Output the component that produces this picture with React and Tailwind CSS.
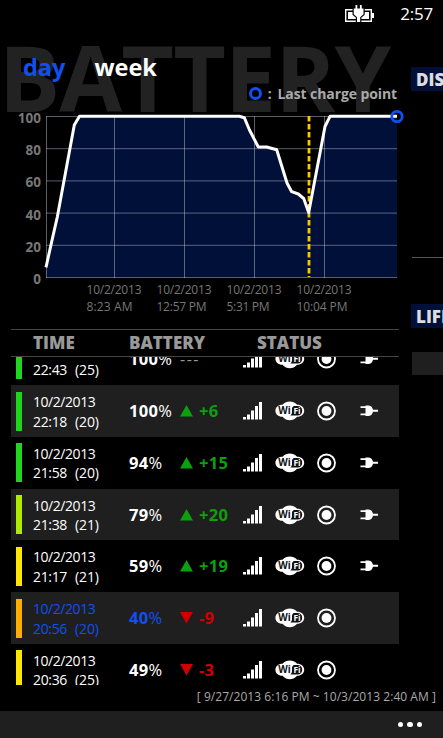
const LEVELS = [100, 80, 60, 40, 20, 0];

const TICKS = [
    { x: 114.5, date: "10/2/2013", time: "8:23 AM", width: 46 },
    { x: 184.5, date: "10/2/2013", time: "12:57 PM", width: 50 },
    { x: 254.5, date: "10/2/2013", time: "5:31 PM", width: 43 },
    { x: 324.5, date: "10/2/2013", time: "10:04 PM", width: 51 },
];

const ROWS = [
    { time: "22:43", gap: "(25)", level: 100, diff: null, bar: "bg-[#1fd51f]", plugged: true },
    { time: "22:18", gap: "(20)", level: 100, diff: 6, bar: "bg-[#1fd51f]", plugged: true },
    { time: "21:58", gap: "(20)", level: 94, diff: 15, bar: "bg-[#1fd51f]", plugged: true },
    { time: "21:38", gap: "(21)", level: 79, diff: 20, bar: "bg-[#b0ea00]", plugged: true },
    { time: "21:17", gap: "(21)", level: 59, diff: 19, bar: "bg-[#ffe600]", plugged: true },
    { time: "20:56", gap: "(20)", level: 40, diff: -9, bar: "bg-[#ffae00]", plugged: false, selected: true },
    { time: "20:36", gap: "(25)", level: 49, diff: -3, bar: "bg-[#ffe600]", plugged: false },
];

const LINE = "46,161.3 51.7,135.7 57.3,111 74.3,19 79.5,10.3 239.3,10.3 244.3,11.7 249.5,24 258.3,41 266.7,41 276.7,43.7 287,77 291.7,85.7 298.3,88 303.7,92.5 308.7,106.5 325,20.5 330,10.3 397,10.3";

function BatteryPlug() {
    return (
        <svg width="30" height="18" viewBox="0 0 30 18" fill="#fff">
            <path d="M.7 4.700h25.600v11.600H.7z" fill="none" stroke="#fff" strokeWidth="1.400" />
            <path d="M27 8h2v5h-2zM3 7h21v7H3z" />
            <path d="M10.500 0h1.800v3.500h2.600V0h1.800v3.500h1.800v5.700l-3.300 3V17h-3.200v-4.800l-3.300-3V3.500h1.800z" stroke="#000" strokeWidth="2.400" paintOrder="stroke" />
        </svg>
    );
}

function Signal() {
    return (
        <svg width="20" height="18" viewBox="0 0 20 18" fill="#fff">
            <path d="M0 15h3v2.500H0zM4 12.500h3v5H4zM8 8.500h3v9H8zM12 4h3v13.500h-3zM16 0h3v17.500h-3z" />
        </svg>
    );
}

function Wifi() {
    return (
        <svg width="30" height="20" viewBox="0 0 30 20">
            <path d="M7.500 3.800C9.500 1.300 12.300.4 14.800.4s5.300.9 7.300 3.400c4.300 0 7.100 2.600 7.100 6s-2.800 6-7.100 6c-2 2.500-4.800 3.400-7.300 3.400s-5.300-.9-7.300-3.400C3.200 15.800.4 13.200.4 9.800s2.800-6 7.100-6z" fill="#fff" />
            <path d="M19 5h3.500c2.900 0 4.700 1.900 4.700 4.700s-1.800 4.800-4.700 4.800h-7.200c1.500-1 1.700-2.100 1.700-3.900V8.200c0-1.700.6-2.600 2-3.200z" fill="#111" />
            <text x="3.200" y="13.400" fontSize="10" fontWeight="700" fill="#111" textLength="12.500" lengthAdjust="spacingAndGlyphs">Wi</text>
            <text x="18.500" y="13.300" fontSize="9.500" fontWeight="700" fill="#fff" textLength="7.200" lengthAdjust="spacingAndGlyphs">Fi</text>
        </svg>
    );
}

function Target() {
    return (
        <svg width="20" height="20" viewBox="0 0 20 20">
            <circle cx="10.500" cy="10" r="8.500" fill="none" stroke="#fff" strokeWidth="1.800" />
            <circle cx="10.500" cy="10" r="4.900" fill="#fff" />
        </svg>
    );
}

function Plug() {
    return (
        <svg width="18" height="12" viewBox="0 0 18 12" fill="#fff">
            <path d="M.5 1.300h5V.5h2.700c2.500 0 4.200 1.500 4.800 4.200h5v2h-5c-.6 2.700-2.300 4.300-4.800 4.300H5.500v-.8h-5V8.400h5V3.100h-5z" />
        </svg>
    );
}

function Chart() {
    return (
        <svg width="411" height="214" viewBox="0 0 411 214" className="block shrink-0">
            <polygon points={`${LINE} 397,171.500 46,171.500`} fill="#001038" />
            {LEVELS.map((level, i) => (
                <g key={level}>
                    <line x1="46" x2="397" y1={10.5 + i * 32.2} y2={10.5 + i * 32.2} stroke="#c8ccdc" strokeOpacity=".45" />
                    <text x="41" y={17 + i * 32.2} textAnchor="end" fontSize="13.500" fontWeight="700" fill="#777">{level}</text>
                </g>
            ))}
            <line x1="46.500" x2="46.500" y1="10" y2="172" stroke="#c8ccdc" strokeOpacity=".45" />
            {TICKS.map((tick) => (
                <g key={tick.x} fontSize="12" fill="#777">
                    <line x1={tick.x} x2={tick.x} y1="10" y2="172" stroke="#c8ccdc" strokeOpacity=".45" />
                    <text x={tick.x - 28} y="187.500" textLength="55">{tick.date}</text>
                    <text x={tick.x - 28} y="205" textLength={tick.width}>{tick.time}</text>
                </g>
            ))}
            <line x1="309" x2="309" y1="10" y2="171" stroke="#f5c800" strokeWidth="2.800" strokeDasharray="5.500 2.500" />
            <polyline points={LINE} fill="none" stroke="#fff" strokeWidth="3" strokeLinejoin="round" />
            <circle cx="397" cy="10.500" r="5.200" fill="none" stroke="#1050f0" strokeWidth="2.800" />
        </svg>
    );
}

function Diff({ value }) {
    if (value === null) {
        return <span className="w-[63px] text-base tracking-[1.500px] text-[#999]">---</span>;
    }
    const up = value > 0;
    return (
        <div className={`flex w-[63px] items-center gap-[6px] ${up ? "text-[#0ca00c]" : "text-[#d00000]"}`}>
            <svg width="13" height="12" viewBox="0 0 13 12" fill="currentColor">
                <path d={up ? "M6.500 0L13 11.500H0z" : "M0 0h13L6.500 11.500z"} />
            </svg>
            <span className="pt-px text-[16.5px] font-bold tracking-[0.3px]">{up ? `+${value}` : value}</span>
        </div>
    );
}

function Row({ row, striped }) {
    return (
        <div className={`flex h-[51.75px] shrink-0 items-center pl-[5px] ${striped ? "bg-[#1f1f1f]" : ""} ${row.selected ? "text-[#1050f0]" : "text-white"}`}>
            <div className={`mr-[11px] h-[39px] w-[6px] ${row.bar}`} />
            <div className="w-[96px] pt-px text-[14px] leading-[19.5px] tracking-[-0.45px]">
                <div>10/2/2013</div>
                <div className="flex">
                    <span className="w-[42px] tracking-[-0.35px]">{row.time}</span>
                    <span className="tracking-[-0.1px]">{row.gap}</span>
                </div>
            </div>
            <div className="w-[51px] pt-px text-[16.5px] tracking-[0.3px]"><b>{row.level}</b>%</div>
            <Diff value={row.diff} />
            <div className="flex items-center">
                <Signal />
                <div className="ml-[12px]"><Wifi /></div>
                <div className="ml-[11px]"><Target /></div>
                {row.plugged && <div className="ml-[24px]"><Plug /></div>}
            </div>
        </div>
    );
}

export default function App() {
    return (
        <div className="flex h-[738px] w-[443px] flex-col overflow-hidden bg-black font-['Open_Sans','Noto_Sans',sans-serif] text-white">
            <div className="flex h-[30px] shrink-0 items-start justify-end gap-[25px] pr-[10px] pt-[5px]">
                <BatteryPlug />
                <span className="text-[17px] leading-[18px] tracking-[-0.2px]">2:57</span>
            </div>

            <div className="flex h-[655px] shrink-0">
                <div className="relative flex w-[411px] shrink-0 flex-col">
                    <div className="absolute left-[-1px] top-[-15px] text-[91px] font-bold leading-[124px] tracking-[-0.8px] text-[#222]">BATTERY</div>

                    <div className="relative flex h-[53px] items-center gap-[29px] pl-[23px] pt-[20px] text-[23.5px] font-bold leading-[32px]">
                        <span className="text-[#1050f0]">day</span>
                        <span>week</span>
                    </div>
                    <div className="relative flex h-[23px] items-center justify-end gap-[6px] pb-[2px] pr-[14px] text-[14px] font-bold tracking-[-0.1px] text-[#aaa]">
                        <div className="size-[13px] rounded-full border-[3px] border-[#1050f0]" />
                        <span>:</span>
                        <span>Last charge point</span>
                    </div>

                    <div className="relative"><Chart /></div>

                    <div className="ml-[11px] mt-[9px] flex h-[28px] w-[388px] shrink-0 items-center border-y border-[#444] text-[17px] font-extrabold text-[#999]">
                        <span className="w-[96px] pl-[22px]">TIME</span>
                        <span className="ml-[22px] w-[128px]">BATTERY</span>
                        <span>STATUS</span>
                    </div>

                    <div className="ml-[11px] flex h-[328px] w-[388px] flex-col overflow-hidden">
                        <div className="mt-[-23.6px] flex flex-col">
                            {ROWS.map((row, i) => (
                                <Row key={row.time} row={row} striped={i % 2 === 1} />
                            ))}
                        </div>
                    </div>
                </div>

                {/* next panorama page peeking in */}
                <div className="flex w-[32px] flex-col overflow-hidden text-[17px] font-extrabold leading-[25px] text-[#ddd]">
                    <div className="mt-[37px] h-[24px] bg-[#001038] pl-[5px]">DISCHARGE</div>
                    <div className="ml-px mt-[166px] h-px bg-[#555]" />
                    <div className="mt-[46px] h-[24px] bg-[#001038] pl-[5px]">LIFE</div>
                    <div className="ml-px mt-[24px] h-[23px] bg-[#1f1f1f]" />
                </div>
            </div>

            <div className="h-[26px] shrink-0 pr-[7px] text-right text-[12px] leading-[24px] tracking-[0.05px] text-[#aaa]">
                [ 9/27/2013 6:16 PM ~ 10/3/2013 2:40 AM ]
            </div>
            <div className="flex h-[27px] shrink-0 items-center justify-end gap-[4px] bg-[#1f1f1f] pr-[21px]">
                <span className="size-[5.5px] rounded-full bg-white" />
                <span className="size-[5.5px] rounded-full bg-white" />
                <span className="size-[5.5px] rounded-full bg-white" />
            </div>
        </div>
    );
}
